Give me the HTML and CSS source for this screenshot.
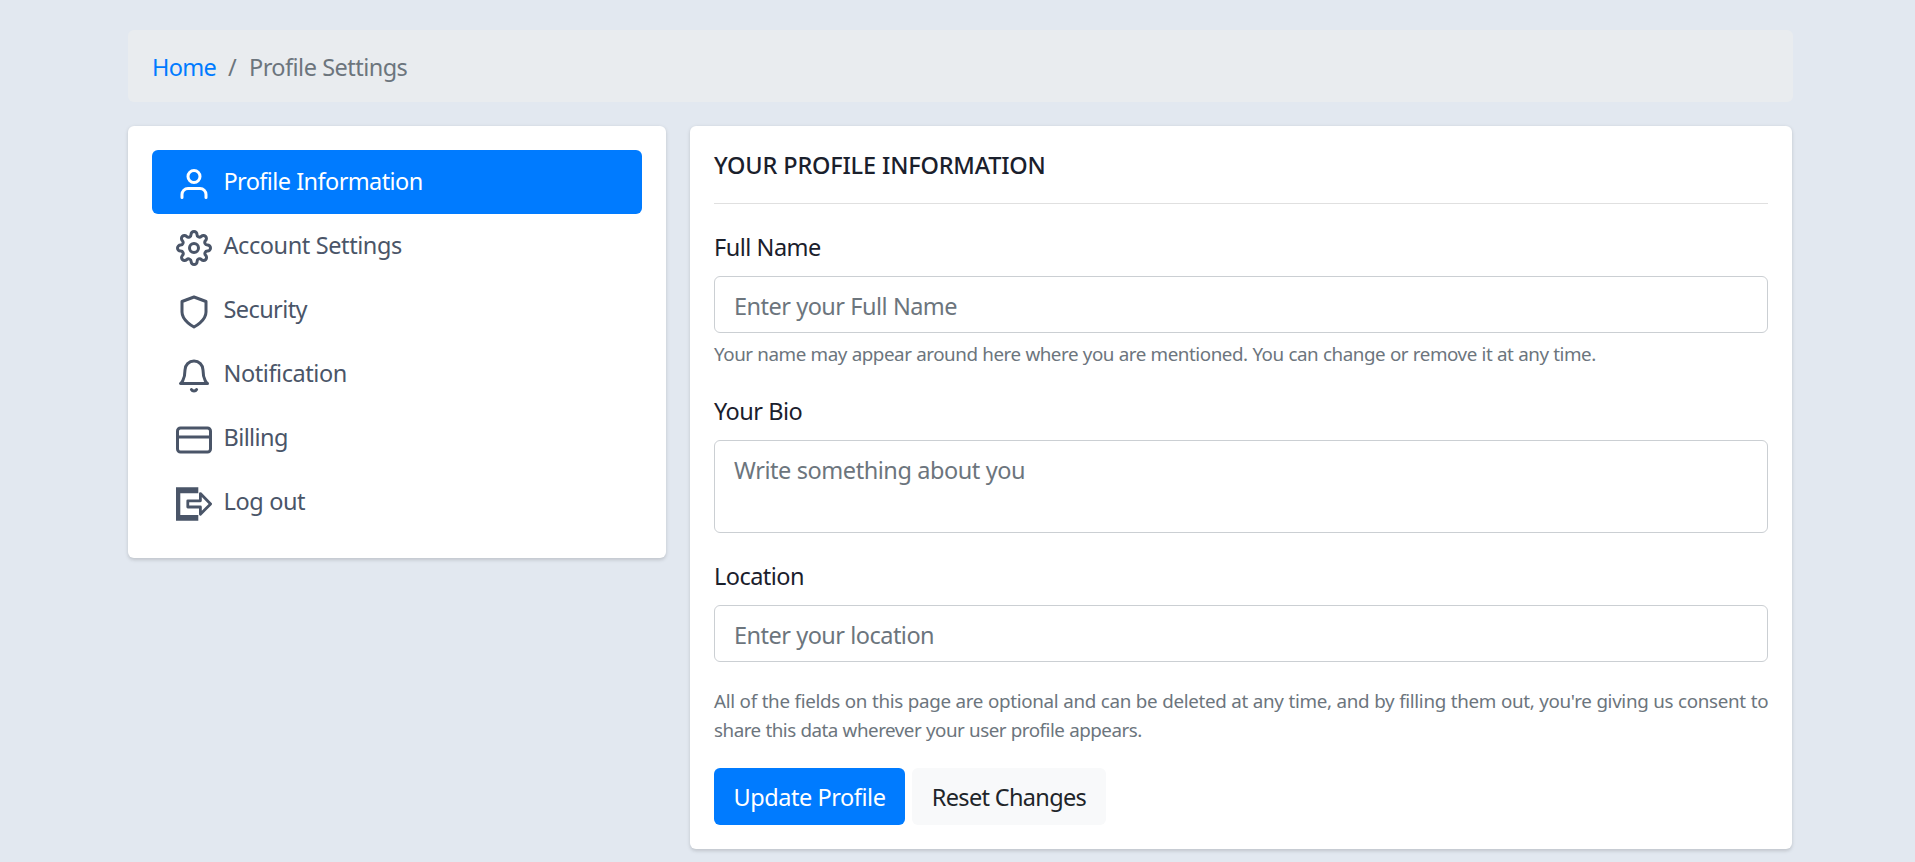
FILE: index.html
```html
<!DOCTYPE html>
<html lang="en">
<head>
<meta charset="utf-8">
<title>Profile Settings</title>
<link rel="stylesheet" href="styles.css">
</head>
<body>
<div class="container">
  <nav class="breadcrumb">
    <a class="crumb-link" href="#">Home</a>
    <span class="crumb-sep">/</span>
    <span class="crumb-current">Profile Settings</span>
  </nav>
  <div class="row">
    <aside class="card side">
      <a class="nav-link active" href="#">
        <svg class="icon" viewBox="0 0 24 24"><path d="M20 21v-2a4 4 0 0 0-4-4H8a4 4 0 0 0-4 4v2"/><circle cx="12" cy="7" r="4"/></svg>
        <span>Profile Information</span>
      </a>
      <a class="nav-link loose" href="#">
        <svg class="icon" viewBox="0 0 24 24"><circle cx="12" cy="12" r="3"/><path d="M19.4 15a1.65 1.65 0 0 0 .33 1.82l.06.06a2 2 0 0 1 0 2.83 2 2 0 0 1-2.83 0l-.06-.06a1.65 1.65 0 0 0-1.82-.33 1.65 1.65 0 0 0-1 1.51V21a2 2 0 0 1-2 2 2 2 0 0 1-2-2v-.09A1.65 1.65 0 0 0 9 19.4a1.65 1.65 0 0 0-1.82.33l-.06.06a2 2 0 0 1-2.83 0 2 2 0 0 1 0-2.83l.06-.06a1.65 1.65 0 0 0 .33-1.82 1.65 1.65 0 0 0-1.51-1H3a2 2 0 0 1-2-2 2 2 0 0 1 2-2h.09A1.65 1.65 0 0 0 4.6 9a1.65 1.65 0 0 0-.33-1.82l-.06-.06a2 2 0 0 1 0-2.83 2 2 0 0 1 2.83 0l.06.06a1.65 1.65 0 0 0 1.82.33H9a1.65 1.65 0 0 0 1-1.51V3a2 2 0 0 1 2-2 2 2 0 0 1 2 2v.09a1.65 1.65 0 0 0 1 1.51 1.65 1.65 0 0 0 1.82-.33l.06-.06a2 2 0 0 1 2.83 0 2 2 0 0 1 0 2.83l-.06.06a1.65 1.65 0 0 0-.33 1.82V9a1.65 1.65 0 0 0 1.51 1H21a2 2 0 0 1 2 2 2 2 0 0 1-2 2h-.09a1.65 1.65 0 0 0-1.51 1z"/></svg>
        <span>Account Settings</span>
      </a>
      <a class="nav-link" href="#">
        <svg class="icon" viewBox="0 0 24 24"><path d="M12 22s8-4 8-10V5l-8-3-8 3v7c0 6 8 10 8 10z"/></svg>
        <span>Security</span>
      </a>
      <a class="nav-link loose" href="#">
        <svg class="icon" viewBox="0 0 24 24"><path d="M18 8A6 6 0 0 0 6 8c0 7-3 9-3 9h18s-3-2-3-9"/><path d="M13.73 21a2 2 0 0 1-3.46 0"/></svg>
        <span>Notification</span>
      </a>
      <a class="nav-link" href="#">
        <svg class="icon" viewBox="0 0 24 24"><rect x="1" y="4" width="22" height="16" rx="2" ry="2"/><path d="M1 10h22"/></svg>
        <span>Billing</span>
      </a>
      <a class="nav-link loose" href="#">
        <svg class="icon icon-logout" viewBox="0 0 36 36"><path class="solid" d="M0 1.3H22.3V7.2H4.3V29H22.3V34.8H0Z"/><path d="M11.8 14.8H24.4V7.6L34.6 17.9L24.4 28.2V21H11.8Z"/></svg>
        <span>Log out</span>
      </a>
    </aside>
    <main class="card main">
      <h6 class="title">YOUR PROFILE INFORMATION</h6>
      <hr class="rule">
      <form class="form">
        <div class="group">
          <label class="label" for="fullName">Full Name</label>
          <input class="control" id="fullName" type="text" placeholder="Enter your Full Name">
          <small class="hint">Your name may appear around here where you are mentioned. You can change or remove it at any time.</small>
        </div>
        <div class="group">
          <label class="label" for="bio">Your Bio</label>
          <textarea class="control area" id="bio" placeholder="Write something about you"></textarea>
        </div>
        <div class="group">
          <label class="label" for="location">Location</label>
          <input class="control" id="location" type="text" placeholder="Enter your location">
        </div>
        <div class="group note">
          <div class="note-first">All of the fields on this page are optional and can be deleted at any time, and by filling them out, you're giving us consent to</div>
          <div>share this data wherever your user profile appears.</div>
        </div>
        <div class="actions">
          <button class="btn primary" type="button">Update Profile</button>
          <button class="btn light" type="reset">Reset Changes</button>
        </div>
      </form>
    </main>
  </div>
</div>
</body>
</html>
```
FILE: styles.css
```css
* { box-sizing: border-box; }
body {
  margin: 0;
  height: 862px;
  overflow: hidden;
  background: #e2e8f0;
  color: #1a202c;
  font-family: "Noto Sans", "Open Sans", sans-serif;
  font-size: 23.5px;
  line-height: 36px;
  letter-spacing: -0.54px;
  word-spacing: 0.3px;
  white-space: nowrap;
}
a { text-decoration: none; }
.container { width: 1665px; margin: 0 0 0 128px; padding-top: 30px; }
.breadcrumb {
  display: flex;
  height: 72px;
  margin-bottom: 24px;
  padding: 19px 24px 17px;
  border-radius: 6px;
  background: #e9ecef;
  color: #6c757d;
}
.crumb-link { width: 64px; color: #007bff; letter-spacing: -0.7px; }
.crumb-sep { width: 33px; padding-left: 12px; }
.row { display: flex; align-items: flex-start; gap: 24px; }
.card {
  padding: 24px;
  border-radius: 6px;
  background: #fff;
  box-shadow: 0 1.5px 4.5px rgba(0, 0, 0, .1), 0 1.5px 3px rgba(0, 0, 0, .06);
}
.side { width: 538px; height: 432px; }
.main { width: 1102px; height: 723px; }
.nav-link {
  display: flex;
  align-items: center;
  gap: 11.5px;
  height: 64px;
  padding: 0 24px;
  border-radius: 6px;
  color: #4a5568;
  letter-spacing: -0.6px;
}
.nav-link span { padding-bottom: 2px; }
.nav-link.loose { letter-spacing: -0.43px; }
.nav-link.active { background: #007bff; color: #fff; }
.icon {
  width: 36px;
  height: 36px;
  margin-top: 4px;
  fill: none;
  stroke: currentColor;
  stroke-width: 2;
  stroke-linecap: round;
  stroke-linejoin: round;
}
.icon-logout { stroke-width: 2.8; stroke-linecap: butt; }
.solid { fill: currentColor; stroke: none; }
.title { margin: 0; padding-top: 1px; font-size: 23.5px; font-weight: 500; line-height: 28px; letter-spacing: -0.2px; }
.rule { height: 1px; margin: 24px 0; border: 0; background: rgba(0, 0, 0, .12); }
.group { margin-bottom: 24px; }
.label { display: block; width: max-content; margin-bottom: 11px; padding-top: 1px; }
.control {
  display: block;
  width: 100%;
  height: 57px;
  margin: 0;
  padding: 11px 19px 9px;
  border: 1px solid #cbcfd3;
  border-radius: 6px;
  background: #fff;
  color: #495057;
  font: inherit;
  letter-spacing: inherit;
  word-spacing: inherit;
  outline: 0;
  resize: none;
}
.control::placeholder { color: #6c757d; opacity: 1; }
.area { height: 93px; overflow: hidden; letter-spacing: -0.46px; }
.hint { display: block; width: max-content; margin-top: 7px; margin-bottom: -1px; color: #6c757d; font-size: 18.8px; line-height: 29px; letter-spacing: -0.45px; }
.note { padding-top: 1px; margin-bottom: 23px; color: #6c757d; font-size: 18.8px; line-height: 29px; letter-spacing: -0.48px; }
.note div { width: max-content; }
.note .note-first { letter-spacing: -0.32px; }
.actions { display: flex; gap: 7px; }
.btn { height: 57px; padding: 1px 0 0; border: 0; border-radius: 6px; font: inherit; }
.primary { width: 191px; background: #007bff; color: #fff; letter-spacing: -0.45px; }
.light { width: 194px; background: #f8f9fa; color: #212529; letter-spacing: -0.66px; }
```
